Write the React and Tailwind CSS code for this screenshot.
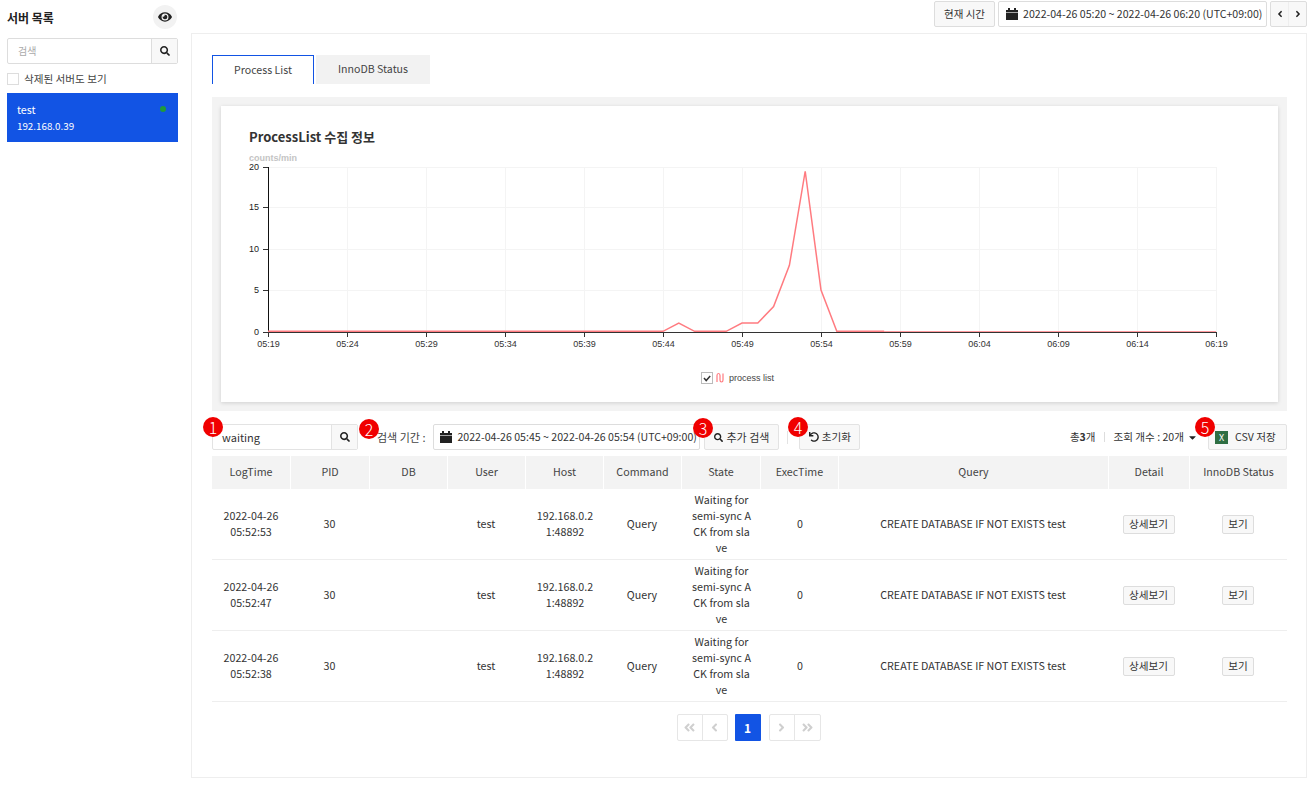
import React from 'react';
import { FaEye, FaSearch, FaAngleLeft, FaAngleRight, FaAngleDoubleLeft, FaAngleDoubleRight, FaUndo, FaCaretDown } from 'react-icons/fa';

const FONT = 'font-["Noto_Sans_CJK_KR","Noto_Sans",sans-serif]';

const columns = [
  { name: 'LogTime', width: 'w-[78px]' },
  { name: 'PID', width: 'w-[79px]' },
  { name: 'DB', width: 'w-[78px]' },
  { name: 'User', width: 'w-[78px]' },
  { name: 'Host', width: 'w-[78px]' },
  { name: 'Command', width: 'w-[78px]' },
  { name: 'State', width: 'w-[79px]' },
  { name: 'ExecTime', width: 'w-[78px]' },
  { name: 'Query', width: 'w-[270px]' },
  { name: 'Detail', width: 'w-[81px]' },
  { name: 'InnoDB Status', width: 'w-[98px]' },
];

const rows = [
  { date: '2022-04-26', time: '05:52:53' },
  { date: '2022-04-26', time: '05:52:47' },
  { date: '2022-04-26', time: '05:52:38' },
];

const ticks = ['05:19', '05:24', '05:29', '05:34', '05:39', '05:44', '05:49', '05:54', '05:59', '06:04', '06:09', '06:14', '06:19'];
const yLabels = [
  { label: '20', y: 17 },
  { label: '15', y: 57 },
  { label: '10', y: 99 },
  { label: '5', y: 140 },
  { label: '0', y: 182 },
];

const series = { 26: 1, 30: 1, 31: 1, 32: 3, 33: 8, 34: 19.4, 35: 5 };
const linePoints = Array.from({ length: 40 }, (_, i) => {
  const x = 47 + i * 15.8;
  const y = 181.3 - (series[i] || 0) * 8.25;
  return `${x},${y}`;
}).join(' ');

const CalendarIcon = () => (
  <svg width="12" height="12" viewBox="0 0 12 12" className="shrink-0" fill="#222">
    <rect x="0" y="2" width="12" height="10" />
    <rect x="2" y="0" width="2" height="2" />
    <rect x="8" y="0" width="2" height="2" />
    <rect x="0" y="4" width="12" height="0.6" fill="#fff" />
  </svg>
);

const Badge = ({ n, className }) => (
  <span className={`absolute z-10 flex h-[20px] w-[20px] items-center justify-center rounded-full bg-[#f00000] text-[16px] leading-none font-light text-white ${className}`}>
    {n}
  </span>
);

const Chart = () => (
  <svg width="1057" height="252" className="block font-['Liberation_Sans',sans-serif]">
    <text x="28" y="11" fontSize="9" fontWeight="700" fill="#c4c4c4">counts/min</text>
    {yLabels.map(t => (
      <g key={t.label}>
        <line x1="47" x2="995" y1={t.y + 0.5} y2={t.y + 0.5} stroke="#f4f4f4" />
        <line x1="42" x2="47" y1={t.y + 0.5} y2={t.y + 0.5} stroke="#333" />
        <text x="38" y={t.y + 3} fontSize="9" fill="#222" textAnchor="end">{t.label}</text>
      </g>
    ))}
    {ticks.map((t, i) => {
      const x = 47.5 + i * 79;
      return (
        <g key={t}>
          <line x1={x} x2={x} y1="17" y2="182" stroke="#f4f4f4" />
          <line x1={x} x2={x} y1="182" y2="187" stroke="#333" />
          <text x={x} y="197" fontSize="9" fill="#333" textAnchor="middle">{t}</text>
        </g>
      );
    })}
    <line x1="47.5" x2="47.5" y1="17" y2="182" stroke="#111" />
    <line x1="47" x2="995" y1="182.5" y2="182.5" stroke="#333" />
    <polyline points={linePoints} fill="none" stroke="#ff7b80" strokeWidth="1.5" />
    <line x1="663" x2="995" y1="181.5" y2="181.5" stroke="#ff9a9e" />
    <rect x="480.5" y="222.5" width="11" height="11" fill="#fff" stroke="#bbb" />
    <path d="M483 228l2.2 2.5 4-4.5" fill="none" stroke="#333" strokeWidth="1.5" />
    <path d="M496 232v-6.5q0-2 1.5-2t1.5 2v4.5q0 2 1.5 2t1.5-2v-6.5" fill="none" stroke="#ff7b80" strokeWidth="1.2" />
    <text x="508" y="231" fontSize="9" fill="#444">process list</text>
  </svg>
);

const PageButton = ({ children, className }) => (
  <span className={`flex h-[27px] w-[26px] items-center justify-center border border-[#e6e6e6] text-[13px] text-[#cfcfcf] ${className}`}>
    {children}
  </span>
);

export default function App() {
  return (
    <div className={`flex h-[785px] w-[1316px] overflow-hidden bg-white text-[12px] text-[#333] ${FONT}`}>
      <aside className="ml-[7px] w-[171px] shrink-0">
        <div className="flex h-[38px] items-center justify-between pb-[2px]">
          <h2 className="text-[12px] font-bold text-[#222]">서버 목록</h2>
          <span className="mr-px mb-[2px] flex h-[24px] w-[24px] items-center justify-center rounded-full bg-[#f2f2f2] text-[14px] text-[#222]">
            <FaEye />
          </span>
        </div>
        <div className="flex h-[26px] rounded-[2px] border border-[#ddd]">
          <span className="flex-1 pl-[10px] text-[10px] leading-[24px] text-[#aaa]">검색</span>
          <span className="flex w-[26px] items-center justify-center border-l border-[#ddd] bg-[#f8f8f8] text-[10px] text-[#222]">
            <FaSearch />
          </span>
        </div>
        <label className="mt-[8px] flex h-[13px] items-center gap-[5px] text-[10.6px] text-[#444]">
          <span className="h-[12px] w-[12px] border border-[#ddd] bg-white" />
          삭제된 서버도 보기
        </label>
        <div className="relative mt-[8px] h-[49px] bg-[#1254e4] px-[10px] pt-[8px] text-white">
          <div className="text-[10.7px] leading-[18px]">test</div>
          <div className="text-[9.8px] leading-[14px]">192.168.0.39</div>
          <span className="absolute top-[13px] right-[12px] h-[6px] w-[6px] rounded-full bg-[#1f9a3c]" />
        </div>
      </aside>

      <div className="ml-[13px] flex w-[1116px] shrink-0 flex-col">
        <div className="flex h-[33px] justify-end pt-px">
          <button className="h-[26px] w-[61px] rounded-[2px] border border-[#ddd] bg-[#f8f8f8] text-[10.5px] text-[#333]">현재 시간</button>
          <div className="ml-[3px] flex h-[26px] w-[269px] items-center gap-[5px] rounded-[2px] border border-[#ddd] pl-[7px] text-[10.6px] whitespace-nowrap text-[#333]">
            <CalendarIcon />
            2022-04-26 05:20 ~ 2022-04-26 06:20 (UTC+09:00)
          </div>
          <div className="ml-[3px] flex h-[26px] w-[37px] rounded-[2px] border border-[#ddd] bg-[#f8f8f8] text-[10px] text-[#222]">
            <span className="flex flex-1 items-center justify-center border-r border-[#eee]"><FaAngleLeft /></span>
            <span className="flex flex-1 items-center justify-center"><FaAngleRight /></span>
          </div>
        </div>

        <main className="h-[745px] border border-[#eee] pt-[21px] pr-[19px] pl-[20px]">
          <div className="flex h-[29px] text-[10.6px] text-[#444]">
            <span className="flex w-[102px] items-center justify-center border-x border-t border-[#1254e4] pb-px">Process List</span>
            <span className="ml-[2px] flex w-[114px] items-center justify-center bg-[#f2f2f2] pb-px">InnoDB Status</span>
          </div>

          <div className="mt-[13px] h-[314px] bg-[#f3f3f3] p-[9px]">
            <div className="h-[296px] bg-white shadow-[0_1px_4px_rgba(0,0,0,0.15)]">
              <h3 className="h-[44px] pt-[20px] pl-[28px] text-[13px] leading-[21px] font-bold text-[#333]">ProcessList 수집 정보</h3>
              <Chart />
            </div>
          </div>

          <div className="relative mt-[13px] flex h-[26px] items-center text-[10.6px]">
            <Badge n="1" className="top-[-7px] left-[-9px]" />
            <div className="flex h-[26px] w-[146px] rounded-[2px] border border-[#e3e3e3]">
              <span className="flex-1 pl-[9px] text-[11px] leading-[24px] text-[#333]">waiting</span>
              <span className="flex w-[26px] items-center justify-center border-l border-[#e3e3e3] bg-[#f8f8f8] text-[10px] text-[#222]"><FaSearch /></span>
            </div>
            <Badge n="2" className="top-[-5px] left-[147px]" />
            <span className="ml-[19px] text-[11px] whitespace-nowrap text-[#444]">검색 기간 :</span>
            <div className="ml-[8px] flex h-[26px] w-[267px] items-center gap-[5px] rounded-[2px] border border-[#ddd] pl-[6px] whitespace-nowrap text-[#333]">
              <CalendarIcon />
              2022-04-26 05:45 ~ 2022-04-26 05:54 (UTC+09:00)
            </div>
            <Badge n="3" className="top-[-6px] left-[481px]" />
            <button className="ml-[4px] flex h-[26px] w-[75px] items-center justify-center gap-[3px] rounded-[2px] border border-[#e3e3e3] bg-[#f8f8f8] text-[11px] text-[#333]">
              <FaSearch className="text-[9px] text-[#222]" />
              추가 검색
            </button>
            <span className="ml-[8px] h-[13px] w-px bg-[#e3e3e3]" />
            <Badge n="4" className="top-[-7px] left-[576px]" />
            <button className="ml-[11px] flex h-[26px] w-[61px] items-center justify-center gap-[3px] rounded-[2px] border border-[#e3e3e3] bg-[#f8f8f8] text-[#333]">
              <FaUndo className="text-[10px] text-[#222]" />
              초기화
            </button>
            <div className="ml-auto flex items-center">
              <span className="text-[10.5px] text-[#333]">총<b>3</b>개</span>
              <span className="mr-[8px] ml-[9px] h-[10px] w-px bg-[#ddd]" />
              <span className="text-[#333]">조회 개수 : 20개</span>
              <FaCaretDown className="ml-[3px] text-[11px] text-[#222]" />
              <Badge n="5" className="top-[-7px] left-[983px]" />
              <button className="ml-[10px] flex h-[26px] w-[79px] items-center justify-start gap-[7px] rounded-[2px] border border-[#e3e3e3] bg-[#f8f8f8] pl-[6px] text-[#333]">
                <span className="flex h-[13px] w-[13px] items-center justify-center bg-[#2f6f43] text-[9px] leading-none text-white">X</span>
                CSV 저장
              </button>
            </div>
          </div>

          <table className="mt-[6px] w-[1075px] table-fixed border-separate border-spacing-0 text-center text-[10.7px] text-[#333]">
            <thead>
              <tr className="h-[33px] bg-[#f3f3f3]">
                {columns.map(c => (
                  <th key={c.name} className={`${c.width} border-l border-white font-normal text-[#444] first:border-l-0`}>{c.name}</th>
                ))}
              </tr>
            </thead>
            <tbody>
              {rows.map(r => (
                <tr key={r.time} className="h-[71px] leading-[16px] [&>td]:border-b [&>td]:border-[#eee]">
                  <td>{r.date}<br />{r.time}</td>
                  <td>30</td>
                  <td></td>
                  <td>test</td>
                  <td className="pr-[9px] pl-[11px] break-all">192.168.0.21:48892</td>
                  <td>Query</td>
                  <td className="pr-[8px] pl-[10px] break-all">Waiting for semi-sync ACK from slave</td>
                  <td className="pl-[2px]">0</td>
                  <td>CREATE DATABASE IF NOT EXISTS test</td>
                  <td>
                    <button className="h-[19px] w-[52px] rounded-[2px] border border-[#ddd] bg-[#f8f8f8] text-[10.6px] leading-none">상세보기</button>
                  </td>
                  <td>
                    <button className="h-[19px] w-[32px] rounded-[2px] border border-[#ddd] bg-[#f8f8f8] text-[10.6px] leading-none">보기</button>
                  </td>
                </tr>
              ))}
            </tbody>
          </table>

          <div className="mt-[12px] flex justify-center pr-[2px]">
            <PageButton className="rounded-l-[2px]"><FaAngleDoubleLeft /></PageButton>
            <PageButton className="-ml-px rounded-r-[2px]"><FaAngleLeft /></PageButton>
            <span className="mr-[8px] ml-[7px] flex h-[27px] w-[26px] items-center justify-center rounded-[1px] bg-[#1254e4] text-[12px] font-semibold text-white">1</span>
            <PageButton className="rounded-l-[2px]"><FaAngleRight /></PageButton>
            <PageButton className="-ml-px w-[27px] rounded-r-[2px]"><FaAngleDoubleRight /></PageButton>
          </div>
        </main>
      </div>
    </div>
  );
}
